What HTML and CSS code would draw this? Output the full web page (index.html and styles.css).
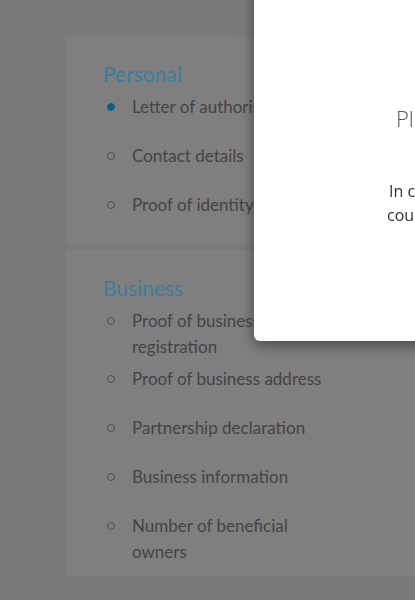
FILE: index.html
```html
<!DOCTYPE html>
<html lang="en">
<head>
<meta charset="utf-8">
<title>Documents</title>
<link rel="stylesheet" href="styles.css">
</head>
<body>
<main class="page">
  <section class="card">
    <h2 class="card-title">Personal</h2>
    <ul class="steps">
      <li class="step active"><span class="dot"></span><span class="label">Letter of authorisation</span></li>
      <li class="step"><span class="dot"></span><span class="label">Contact details</span></li>
      <li class="step"><span class="dot"></span><span class="label">Proof of identity</span></li>
    </ul>
  </section>
  <section class="card card-business">
    <h2 class="card-title">Business</h2>
    <ul class="steps">
      <li class="step"><span class="dot"></span><span class="label">Proof of business registration</span></li>
      <li class="step"><span class="dot"></span><span class="label">Proof of business address</span></li>
      <li class="step"><span class="dot"></span><span class="label">Partnership declaration</span></li>
      <li class="step"><span class="dot"></span><span class="label">Business information</span></li>
      <li class="step"><span class="dot"></span><span class="label">Number of beneficial owners</span></li>
    </ul>
  </section>
</main>
<div class="modal" role="dialog">
  <h3 class="modal-title">Please note</h3>
  <p class="modal-text"><span class="line1">In compliance with regulations in your</span><br>country, we need some extra documents.</p>
</div>
</body>
</html>
```
FILE: styles.css
```css
html, body {
  margin: 0;
  padding: 0;
}
body {
  background: #7a7a7a;
  width: 415px;
  height: 600px;
  overflow: hidden;
  font-family: Lato, "Liberation Sans", sans-serif;
}
.page {
  padding: 36px 0 0 66px;
  display: flex;
  flex-direction: column;
  gap: 5px;
}
.card {
  background: #7f7f7f;
  width: 400px;
  padding: 25px 0 10px 37px;
  box-sizing: border-box;
}
.card-business {
  padding-top: 25px;
  padding-bottom: 11px;
}
.card-title {
  margin: 0;
  font-size: 21px;
  line-height: 26px;
  font-weight: 400;
  color: #3d7d9b;
}
.steps {
  list-style: none;
  margin: 7px 0 0 0;
  padding: 0;
}
.step {
  display: flex;
  align-items: flex-start;
  min-height: 43px;
  font-size: 17px;
  line-height: 26px;
  color: #444;
}
.step + .step {
  margin-top: 6px;
}
.dot {
  flex: none;
  width: 6px;
  height: 6px;
  border: 1.5px solid #505050;
  border-radius: 50%;
  margin: 9px 0 0 4px;
}
.step.active .dot {
  background: #0d5f8a;
  border-color: #0d5f8a;
}
.label {
  margin-left: 17px;
  max-width: 198px;
}
.modal {
  position: fixed;
  left: 254px;
  top: -20px;
  width: 420px;
  height: 361px;
  background: #fff;
  border-radius: 6px;
  box-shadow: 0 4px 14px rgba(0, 0, 0, 0.45);
  font-family: "Open Sans", "Liberation Sans", sans-serif;
  white-space: nowrap;
}
.modal-title {
  margin: 0;
  padding: 122px 0 0 142px;
  font-size: 22px;
  line-height: 32px;
  font-weight: 300;
  color: #555;
}
.modal-text {
  margin: 45px 0 0 133px;
  font-size: 16px;
  line-height: 24px;
  color: #333;
}
.line1 {
  margin-left: 2px;
}
```
